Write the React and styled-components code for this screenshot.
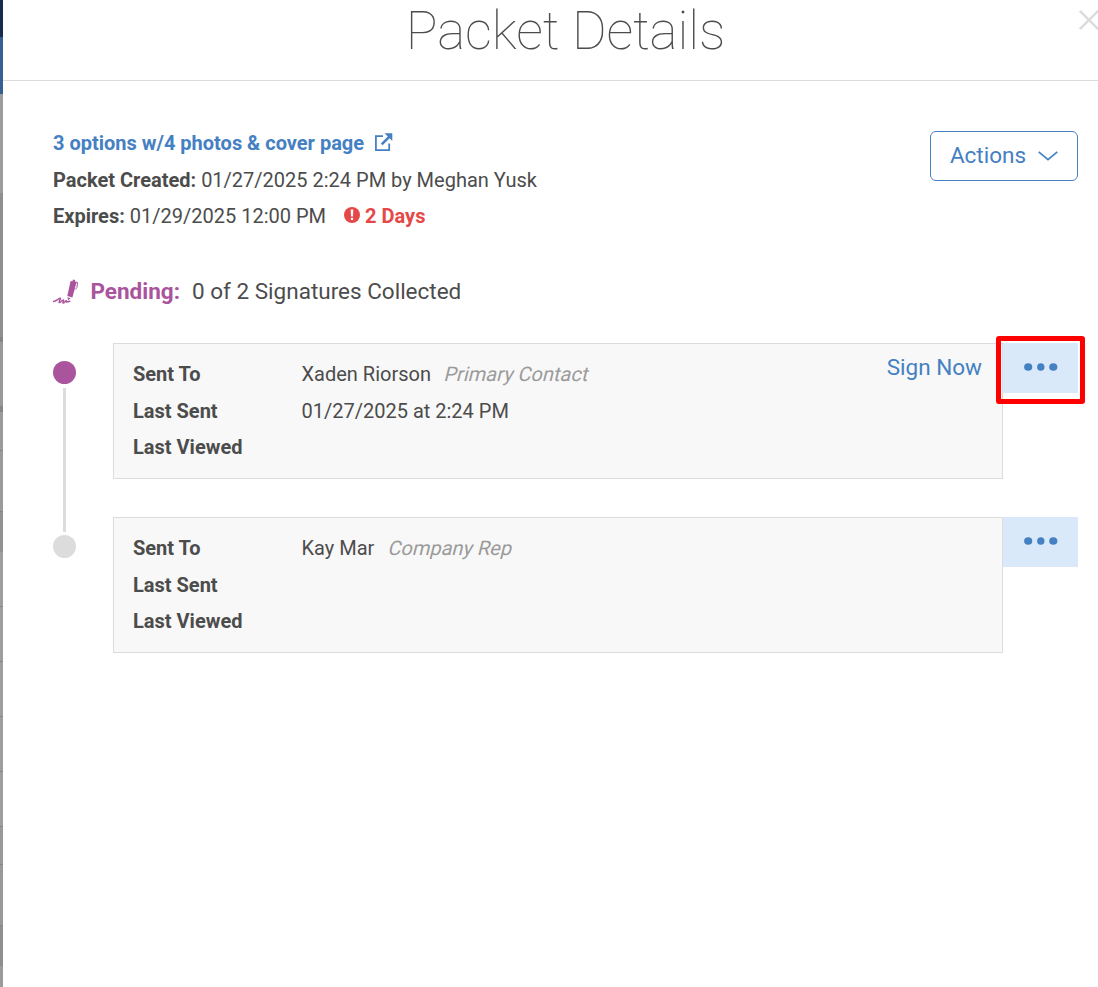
import React from 'react'
import { styled, createGlobalStyle } from 'styled-components'

const recipients = [
  { name: 'Xaden Riorson', role: 'Primary Contact', lastSent: '01/27/2025 at 2:24 PM', canSign: true, active: true, highlighted: true },
  { name: 'Kay Mar', role: 'Company Rep' },
]

// heights of the dimmed page rows left of the panel
const strips = [
  [37, '#162c4a'], [57, '#355f95'], [99, '#9c9c9c'], [144, '#8f8f90'], [5, '#858585'],
  [64, '#999'], [6, '#868686'], [38, '#9b9b9b'], [1, '#858585'], [60, '#9b9b9b'],
  [1, '#858585'], [40, '#929292'], [54, '#9e9e9e'], [1, '#858585'], [54, '#9e9e9e'],
  [1, '#858585'], [54, '#9e9e9e'], [1, '#858585'], [54, '#9e9e9e'], [1, '#858585'],
  [54, '#9e9e9e'], [1, '#858585'], [37, '#999'], [1, '#858585'], [60, '#999'],
  [1, '#858585'], [40, '#8f8f8f'], [21, '#9b9b9b'],
]

const ExternalIcon = () => (
  <svg width="19" height="20" viewBox="0 0 19 20" fill="none">
    <path d="M9 3.2H1.9v14H15.2V10.5" stroke="currentColor" strokeWidth="1.8" />
    <path d="M10.6.3H18.3v7.700l-2.700-2.700-7 7-1.800-1.800 7-7z" fill="currentColor" />
  </svg>
)

const AlertIcon = () => (
  <svg width="16" height="16" viewBox="0 0 16 16">
    <circle cx="8" cy="8" r="8" fill="currentColor" />
    <path d="M6.7 2.6h2.6L9 9.4H7zM6.9 10.8h2.2V13H6.9z" fill="#fff" />
  </svg>
)

const PenIcon = () => (
  <svg width="26" height="26" viewBox="0 0 26 26" fill="none">
    <path d="M17.6 1.900l1.900.3.400-1.600 2.200.4-.2 1.500 1.700.5-4.200 15.400-5.100-1.300z" fill="currentColor" />
    <path d="M14.300 18.300l3.400 1-2.500 1.900z" fill="currentColor" />
    <path d="M22.900 2.900l1.700.7-.7 5-1.700 2" stroke="currentColor" strokeWidth="1" />
    <path d="M.5 22.500c2.600-.2 5.400-3.300 6.800-3.200 1.100.2-2 3.700-1.100 4.300 1 .5 3.200-3 4.200-2.700.9.300-1.300 3-.3 3.200 1.300.2 2.200-2.500 3.200-2.300.8.200-.3 1.300.7 1.200l2.700-.7" stroke="currentColor" strokeWidth="1.400" strokeLinecap="round" />
  </svg>
)

const ChevronIcon = () => (
  <svg width="20" height="10" viewBox="0 0 20 10" fill="none">
    <path d="M.7.8L10 8.600l9.300-7.800" stroke="currentColor" strokeWidth="1.700" />
  </svg>
)

const CloseIcon = () => (
  <svg width="20" height="20" viewBox="0 0 20 20">
    <path d="M.8.8l18.400 18.400M19.200.8L.8 19.200" stroke="currentColor" strokeWidth="2.400" />
  </svg>
)

const DotsIcon = () => (
  <svg width="34" height="8" viewBox="0 0 34 8" fill="currentColor">
    <ellipse cx="4.200" cy="4" rx="4.100" ry="3.800" />
    <ellipse cx="16.800" cy="4" rx="3.700" ry="3.800" />
    <ellipse cx="29.300" cy="4" rx="4.100" ry="3.800" />
  </svg>
)

const Recipient = ({ data, last }) => (
  <RecipientRow>
    <Track>
      <Dot $active={data.active} />
      {!last && <Line />}
    </Track>
    <Card>
      <Details>
        <dt>Sent To</dt>
        <dd>{data.name}<em>{data.role}</em></dd>
        <dt>Last Sent</dt>
        <dd>{data.lastSent}</dd>
        <dt>Last Viewed</dt>
        <dd></dd>
      </Details>
      {data.canSign && <SignNow>Sign Now</SignNow>}
    </Card>
    <MoreButton aria-label="More">
      <DotsIcon />
      {data.highlighted && <Highlight />}
    </MoreButton>
  </RecipientRow>
)

const App = () => {
  return (
    <Page>
      <GlobalStyle />
      <Backdrop>
        {strips.map(([height, color], i) => <Strip key={i} $height={height} $color={color} />)}
      </Backdrop>
      <Panel>
        <Header>
          <Title>Packet Details</Title>
          <CloseButton aria-label="Close"><CloseIcon /></CloseButton>
        </Header>
        <Summary>
          <div>
            <PacketLink>3 options w/4 photos &amp; cover page <ExternalIcon /></PacketLink>
            <InfoLine><b>Packet Created:</b> 01/27/2025 2:24 PM by Meghan Yusk</InfoLine>
            <InfoLine>
              <b>Expires:</b> 01/29/2025 12:00 PM
              <Warning><AlertIcon />2 Days</Warning>
            </InfoLine>
          </div>
          <ActionsButton>Actions <ChevronIcon /></ActionsButton>
        </Summary>
        <Status>
          <PenIcon />
          <b>Pending:</b>
          <span>0 of 2 Signatures Collected</span>
        </Status>
        <List>
          {recipients.map((r, i) => (
            <Recipient key={r.name} data={r} last={i === recipients.length - 1} />
          ))}
        </List>
      </Panel>
    </Page>
  )
}

export default App

const GlobalStyle = createGlobalStyle`
  *{
    box-sizing: border-box;
  }
  body{
    margin: 0;
    overflow: hidden;
    font-family: Roboto, sans-serif;
    font-size: 20px;
    color: #4c4c4c;
    background-color: #fff;
  }
  button{
    font-family: inherit;
    cursor: pointer;
  }
  svg{
    flex: none;
  }
`

const Page = styled.div`
  display: flex;
  height: 987px;
  overflow: hidden;
`

const Backdrop = styled.div`
  width: 3px;
  flex: none;
`

const Strip = styled.div`
  height: ${props => props.$height}px;
  background-color: ${props => props.$color};
`

const Panel = styled.main`
  flex: 1;
  min-width: 0;
  background-color: #fff;
`

const Header = styled.header`
  display: grid;
  grid-template-columns: 29px 1fr 29px;
  height: 81px;
  border-bottom: 1px solid #dcdcdc;
`

const Title = styled.h1`
  grid-column: 2;
  margin: 0;
  padding-left: 30px;
  font-size: 53px;
  font-weight: 100;
  letter-spacing: -.15px;
  line-height: 63px;
  text-align: center;
  white-space: nowrap;
`

const CloseButton = styled.button`
  display: flex;
  align-self: start;
  justify-self: end;
  width: 19px;
  margin-top: 10px;
  padding: 0;
  border: none;
  background: none;
  color: #dcdcdc;
`

const Summary = styled.section`
  display: flex;
  justify-content: space-between;
  align-items: flex-start;
  padding: 44px 20px 0 50px;
`

const InfoLine = styled.div`
  display: flex;
  align-items: center;
  gap: 5px;
  height: 36.5px;
  white-space: nowrap;
  b{
    font-weight: 700;
  }
`

const PacketLink = styled(InfoLine)`
  gap: 10px;
  color: #4480c2;
  font-weight: 700;
`

const Warning = styled.span`
  display: flex;
  align-items: center;
  gap: 5px;
  margin-left: 13px;
  color: #e64747;
  font-weight: 700;
  svg{
    margin-top: -2px;
  }
`

const ActionsButton = styled.button`
  display: flex;
  align-items: center;
  justify-content: center;
  gap: 12px;
  width: 148px;
  height: 50px;
  margin-top: 6px;
  padding: 0 0 2px;
  border: 1px solid #4480c2;
  border-radius: 6px;
  background-color: #fff;
  color: #4480c2;
  font-size: 22.5px;
  svg{
    margin-top: 1px;
  }
`

const Status = styled.div`
  display: flex;
  align-items: center;
  height: 40px;
  margin: 37px 0 0 50px;
  font-size: 22.5px;
  line-height: 26px;
  white-space: nowrap;
  color: #a9549d;
  b{
    margin: 0 12px 2px 11.5px;
    font-weight: 700;
  }
  span{
    margin-bottom: 2px;
    color: #4c4c4c;
  }
`

const List = styled.div`
  display: flex;
  flex-direction: column;
  gap: 38px;
  padding: 31.5px 20px 0 50px;
`

const RecipientRow = styled.div`
  display: flex;
  align-items: flex-start;
  height: 136px;
`

const Track = styled.div`
  display: flex;
  flex-direction: column;
  align-items: center;
  gap: 4px;
  width: 23px;
  margin-right: 37px;
  padding-top: 18px;
`

const Dot = styled.div`
  width: 23px;
  height: 23px;
  border-radius: 50%;
  background-color: ${props => props.$active ? '#a9549d' : '#dcdcdc'};
`

const Line = styled.div`
  width: 3px;
  height: 144px;
  background-color: #dcdcdc;
`

const Card = styled.article`
  display: flex;
  justify-content: space-between;
  width: 890px;
  height: 136px;
  padding: 12px 19px;
  border: 1px solid #dcdcdc;
  background-color: #f8f8f8;
`

const Details = styled.dl`
  display: grid;
  grid-template-columns: 168.5px auto;
  grid-auto-rows: 36.5px;
  align-items: center;
  margin: 0;
  white-space: nowrap;
  dt{
    font-weight: 700;
  }
  dd{
    margin: 0;
  }
  em{
    display: inline-block;
    margin-left: 14.5px;
    color: #9b9b9b;
    font-style: normal;
    transform: skewX(-14deg);
  }
`

const SignNow = styled.a`
  margin: -3px 1px 0 0;
  color: #4480c2;
  font-size: 22.5px;
  line-height: 28px;
`

const MoreButton = styled.button`
  display: flex;
  align-items: center;
  justify-content: center;
  position: relative;
  width: 75px;
  height: 50px;
  padding: 0 0 2px;
  border: none;
  background-color: #dae9f9;
  color: #4480c2;
`

const Highlight = styled.span`
  position: absolute;
  top: -7px;
  left: -7px;
  width: 89px;
  height: 68px;
  border: 5px solid #fe0000;
  border-radius: 3px;
`
